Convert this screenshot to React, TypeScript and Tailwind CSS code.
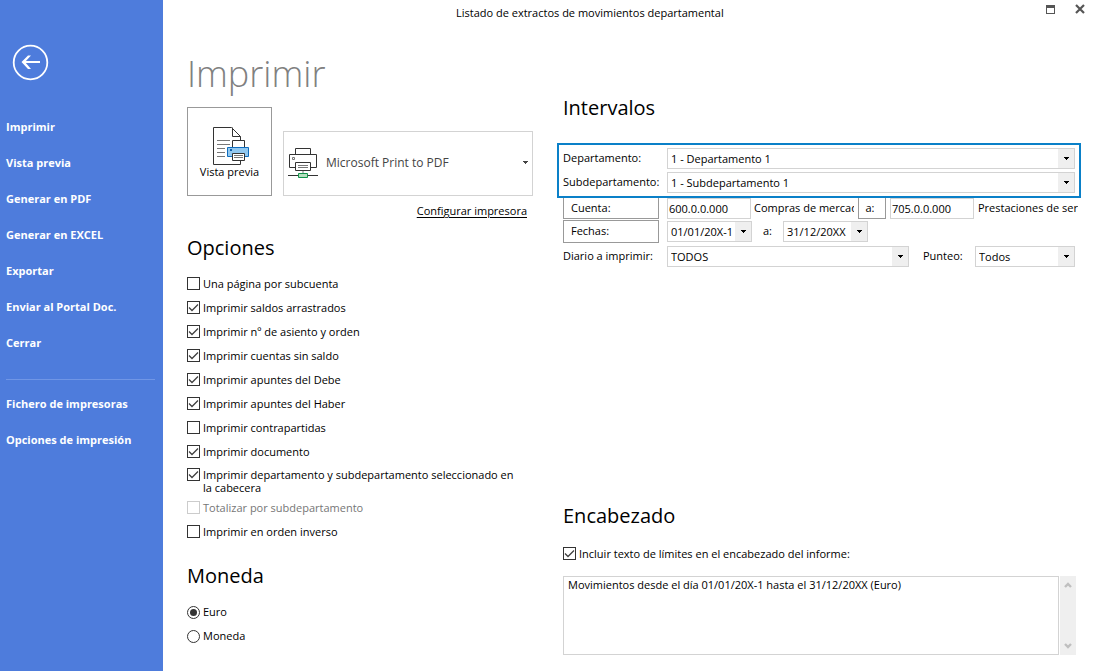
import React from 'react';

const mainLinks = [
  'Imprimir',
  'Vista previa',
  'Generar en PDF',
  'Generar en EXCEL',
  'Exportar',
  'Enviar al Portal Doc.',
  'Cerrar',
];

const setupLinks = ['Fichero de impresoras', 'Opciones de impresión'];

const options = [
  { label: 'Una página por subcuenta', checked: false },
  { label: 'Imprimir saldos arrastrados', checked: true },
  { label: 'Imprimir nº de asiento y orden', checked: true },
  { label: 'Imprimir cuentas sin saldo', checked: true },
  { label: 'Imprimir apuntes del Debe', checked: true },
  { label: 'Imprimir apuntes del Haber', checked: true },
  { label: 'Imprimir contrapartidas', checked: false },
  { label: 'Imprimir documento', checked: true },
  {
    label: 'Imprimir departamento y subdepartamento seleccionado en la cabecera',
    checked: true,
    multiline: true,
  },
  { label: 'Totalizar por subdepartamento', checked: false, disabled: true },
  { label: 'Imprimir en orden inverso', checked: false },
];

interface CheckOptionProps {
  label: string;
  checked: boolean;
  disabled?: boolean;
  multiline?: boolean;
}

function CheckOption({ label, checked, disabled, multiline }: CheckOptionProps) {
  return (
    <label
      className={`flex items-start gap-[3px] pr-4 leading-[13px] has-disabled:text-[#767676] ${
        multiline ? 'pt-1 pb-[2px]' : 'pt-[5px] pb-[6px]'
      }`}
    >
      <span className="grid shrink-0">
        <input
          type="checkbox"
          defaultChecked={checked}
          disabled={disabled}
          className="peer col-start-1 row-start-1 w-[13px] h-[13px] appearance-none border border-[#333] bg-white disabled:border-[#ccc]"
        />
        <svg
          viewBox="0 0 13 13"
          className="hidden peer-checked:block pointer-events-none col-start-1 row-start-1 w-[13px] h-[13px]"
        >
          <path d="M2 6.5 L5 9.5 L11 3.5" fill="none" stroke="#404040" strokeWidth="1.3" />
        </svg>
      </span>
      <span>{label}</span>
    </label>
  );
}

function RadioOption({ label, checked }: { label: string; checked?: boolean }) {
  return (
    <label className="flex items-center gap-[3px] h-6">
      <span className="grid place-items-center shrink-0">
        <input
          type="radio"
          name="moneda"
          defaultChecked={checked}
          className="peer col-start-1 row-start-1 w-[13px] h-[13px] appearance-none rounded-full border border-[#333] bg-white"
        />
        <span className="hidden peer-checked:block pointer-events-none col-start-1 row-start-1 w-[7px] h-[7px] rounded-full bg-[#333]" />
      </span>
      {label}
    </label>
  );
}

interface SelectBoxProps {
  id: string;
  value: string;
  label?: string;
  className?: string;
}

function SelectBox({ id, value, label, className = '' }: SelectBoxProps) {
  return (
    <div className={`grid h-[21px] border border-[#d3d3d3] ${className}`}>
      <select
        id={id}
        aria-label={label}
        className="col-start-1 row-start-1 w-full h-[19px] appearance-none bg-white pl-[3px] leading-[19px]"
      >
        <option>{value}</option>
      </select>
      <span className="col-start-1 row-start-1 justify-self-end pointer-events-none flex items-center justify-center w-4 bg-[#efefef]">
        <svg viewBox="0 0 5 3" className="w-[5px] h-[3px]" shapeRendering="crispEdges">
          <path d="M0 0H5V1H4V2H3V3H2V2H1V1H0Z" fill="#000" />
        </svg>
      </span>
    </div>
  );
}

function PreviewIcon() {
  return (
    <svg viewBox="0 0 37 38" className="w-[37px] h-[38px] ml-1" fill="none">
      <path d="M0.5 0.5H18.5L27.5 9.5V37.5H0.5Z" fill="#fff" stroke="#333" />
      <path d="M19.5 0.5V9.5H27.5" stroke="#333" />
      <path d="M4 13.5H17M4 17.5H17M4 21.5H12M4 25.5H12M4 29.5H12" stroke="#777" />
      <path d="M19.5 20V13.5H31.5V20" fill="#fff" stroke="#333" />
      <path d="M14.5 20.5H35.5V29.5H14.5Z" fill="#91c8f0" stroke="#0f6cbd" />
      <path d="M17 22H19V24H17Z" fill="#0f5ea8" />
      <path d="M19.5 26.5H31.5V33.5H19.5Z" fill="#fff" stroke="#333" />
      <path d="M21 28.5H30M21 30.5H30" stroke="#777" />
    </svg>
  );
}

function PrinterIcon() {
  return (
    <svg viewBox="0 0 30 30" className="w-[30px] h-[30px] shrink-0" fill="none">
      <path d="M7.5 6V0.5H22.5V6" stroke="#333" />
      <path d="M1.5 6.5H28.5V19.5H1.5Z" fill="#fff" stroke="#333" />
      <path d="M4.5 9.5H6.5V11.5H4.5Z" stroke="#777" />
      <path d="M7.5 14.5H22.5V22.5H7.5Z" fill="#fff" stroke="#333" />
      <path d="M10 17.5H20M10 19.5H20" stroke="#777" />
      <path d="M15 23V25" stroke="#bbb" strokeWidth="2" />
      <path d="M0 27.5H30" stroke="#333" />
      <path d="M10.5 25.5H19.5V29.5H10.5Z" fill="#b5dfbf" stroke="#12924a" />
    </svg>
  );
}

function Sidebar() {
  return (
    <nav className="w-[163px] shrink-0 bg-[#4e7cdc] text-white font-bold px-[6px] pt-11">
      <button type="button" aria-label="Volver" className="block ml-[6px] mb-7">
        <svg viewBox="0 0 37 37" className="w-[37px] h-[37px]" fill="none" stroke="#fff">
          <circle cx="18.5" cy="18.5" r="16.8" strokeWidth="1.8" />
          <path d="M11 18H28" strokeWidth="2" />
          <path d="M19 11.5H16L9.5 18L16 25H19L13 18Z" fill="#fff" stroke="none" />
        </svg>
      </button>
      {mainLinks.map((text) => (
        <a key={text} href="#" className="flex items-center h-9">
          {text}
        </a>
      ))}
      <hr className="mt-[18px] mb-[6px] mr-[2px] border-[#7096e6]" />
      {setupLinks.map((text) => (
        <a key={text} href="#" className="flex items-center h-9">
          {text}
        </a>
      ))}
    </nav>
  );
}

function TitleBar() {
  return (
    <header className="flex items-start h-[26px] pr-[9px]">
      <h1 className="pl-[293px] pt-1 leading-[18px] grow">
        Listado de extractos de movimientos departamental
      </h1>
      <button type="button" aria-label="Maximizar" className="mt-[5px] mr-5">
        <svg viewBox="0 0 9 9" className="w-[9px] h-[9px]" shapeRendering="crispEdges">
          <path d="M0 0H9V9H0ZM1 3V8H8V3Z" fill="#555" fillRule="evenodd" />
        </svg>
      </button>
      <button type="button" aria-label="Cerrar" className="mt-1">
        <svg viewBox="0 0 10 10" className="w-[10px] h-[10px]">
          <path d="M1 1L9 9M9 1L1 9" stroke="#555" strokeWidth="2.2" />
        </svg>
      </button>
    </header>
  );
}

function PrintColumn() {
  return (
    <div className="w-[346px] shrink-0">
      <h2 className="h-[81px] pt-6 text-4xl leading-[48px] font-light text-[#808080]">
        Imprimir
      </h2>
      <div className="flex items-end gap-[11px]">
        <button
          type="button"
          className="flex flex-col items-center w-[85px] h-[89px] shrink-0 border border-[#999] pt-[19px] leading-[13px]"
        >
          <PreviewIcon />
          Vista previa
        </button>
        <div className="grid grow h-[65px] border border-[#d3d3d3]">
          <select
            aria-label="Impresora"
            className="col-start-1 row-start-1 w-full h-[61px] appearance-none bg-white pl-[42px] text-xs text-[#444]"
          >
            <option>Microsoft Print to PDF</option>
          </select>
          <span className="col-start-1 row-start-1 h-[61px] pointer-events-none flex items-center justify-between pl-1 pr-1">
            <PrinterIcon />
            <svg viewBox="0 0 5 3" className="w-[5px] h-[3px]" shapeRendering="crispEdges">
              <path d="M0 0H5V1H4V2H3V3H2V2H1V1H0Z" fill="#444" />
            </svg>
          </span>
        </div>
      </div>
      <div className="flex justify-end pt-[6px] pr-[6px]">
        <a href="#" className="leading-[18px] underline underline-offset-2">
          Configurar impresora
        </a>
      </div>

      <h3 className="mt-[14px] mb-[10px] text-xl leading-7">Opciones</h3>
      {options.map((option) => (
        <CheckOption key={option.label} {...option} />
      ))}

      <h3 className="mt-[18px] mb-[10px] text-xl leading-7">Moneda</h3>
      <RadioOption label="Euro" checked />
      <RadioOption label="Moneda" />
    </div>
  );
}

function Ranges() {
  return (
    <section>
      <h3 className="pl-[6px] mb-[21px] text-xl leading-7">Intervalos</h3>
      <div className="flex flex-col gap-[3px] border-2 border-[#0a80c8] p-1 pt-[3px] pb-[3px]">
        <div className="flex items-center">
          <label htmlFor="departamento" className="w-[104px] shrink-0">
            Departamento:
          </label>
          <SelectBox id="departamento" value="1 - Departamento 1" className="grow" />
        </div>
        <div className="flex items-center">
          <label htmlFor="subdepartamento" className="w-[104px] shrink-0 whitespace-nowrap">
            Subdepartamento:
          </label>
          <SelectBox id="subdepartamento" value="1 - Subdepartamento 1" className="grow" />
        </div>
      </div>

      <div className="flex items-center pl-[6px] pr-[3px]">
        <button
          type="button"
          className="w-24 h-[21px] shrink-0 mr-2 border border-t-0 border-[#999] pl-[7px] text-left"
        >
          Cuenta:
        </button>
        <input
          type="text"
          aria-label="Cuenta inicial"
          defaultValue="600.0.0.000"
          className="w-[84px] h-[21px] shrink-0 border border-[#d3d3d3] pl-[1px]"
        />
        <span className="ml-[3px] flex-1 min-w-0 overflow-hidden whitespace-nowrap">
          Compras de mercad
        </span>
        <button
          type="button"
          className="w-7 h-[21px] shrink-0 ml-1 mr-1 border border-t-0 border-[#999] pr-1"
        >
          a:
        </button>
        <input
          type="text"
          aria-label="Cuenta final"
          defaultValue="705.0.0.000"
          className="w-[84px] h-[21px] shrink-0 border border-[#d3d3d3] pl-[1px]"
        />
        <span className="ml-1 flex-1 min-w-0 overflow-hidden whitespace-nowrap">
          Prestaciones de serv
        </span>
      </div>

      <div className="flex items-center mt-[1px] pl-[6px]">
        <button
          type="button"
          className="w-24 h-[23px] shrink-0 mr-2 border border-[#999] pl-[7px] text-left"
        >
          Fechas:
        </button>
        <SelectBox id="desde" label="Fecha inicial" value="01/01/20X-1" className="w-[85px]" />
        <span className="w-[31px] text-center">a:</span>
        <SelectBox id="hasta" label="Fecha final" value="31/12/20XX" className="w-[85px]" />
      </div>

      <div className="flex items-center mt-[3px] pl-[6px] pr-[6px]">
        <label htmlFor="diario" className="w-[104px] shrink-0 whitespace-nowrap">
          Diario a imprimir:
        </label>
        <SelectBox id="diario" value="TODOS" className="grow" />
        <label htmlFor="punteo" className="w-[66px] shrink-0 pl-[14px]">
          Punteo:
        </label>
        <SelectBox id="punteo" value="Todos" className="w-[100px]" />
      </div>
    </section>
  );
}

function ReportHeader() {
  return (
    <section className="mt-auto pl-[6px] pr-[5px]">
      <h3 className="mb-[12px] text-xl leading-7">Encabezado</h3>
      <CheckOption label="Incluir texto de límites en el encabezado del informe:" checked />
      <div className="flex gap-[1px] mt-[10px] h-[79px]">
        <textarea
          aria-label="Texto del encabezado"
          defaultValue="Movimientos desde el día 01/01/20X-1 hasta el 31/12/20XX (Euro)"
          className="grow resize-none border border-[#d3d3d3] px-1 leading-4"
        />
        <div className="flex flex-col items-center justify-between w-4 bg-[#efefef] py-[6px]">
          <svg viewBox="0 0 8 6" className="w-2 h-[6px]" fill="none">
            <path d="M1 5L4 2L7 5" stroke="#bfbfbf" strokeWidth="2.4" />
          </svg>
          <svg viewBox="0 0 8 6" className="w-2 h-[6px]" fill="none">
            <path d="M1 1L4 4L7 1" stroke="#bfbfbf" strokeWidth="2.4" />
          </svg>
        </div>
      </div>
    </section>
  );
}

export default function App() {
  return (
    <div className="flex min-h-screen bg-white text-black text-[11px] font-['Open_Sans','Noto_Sans',sans-serif]">
      <Sidebar />
      <div className="flex flex-col grow min-w-0">
        <TitleBar />
        <main className="flex grow gap-6 pl-6 pr-[13px] pb-4">
          <PrintColumn />
          <div className="flex flex-col grow min-w-0 pt-[68px]">
            <Ranges />
            <ReportHeader />
          </div>
        </main>
      </div>
    </div>
  );
}
